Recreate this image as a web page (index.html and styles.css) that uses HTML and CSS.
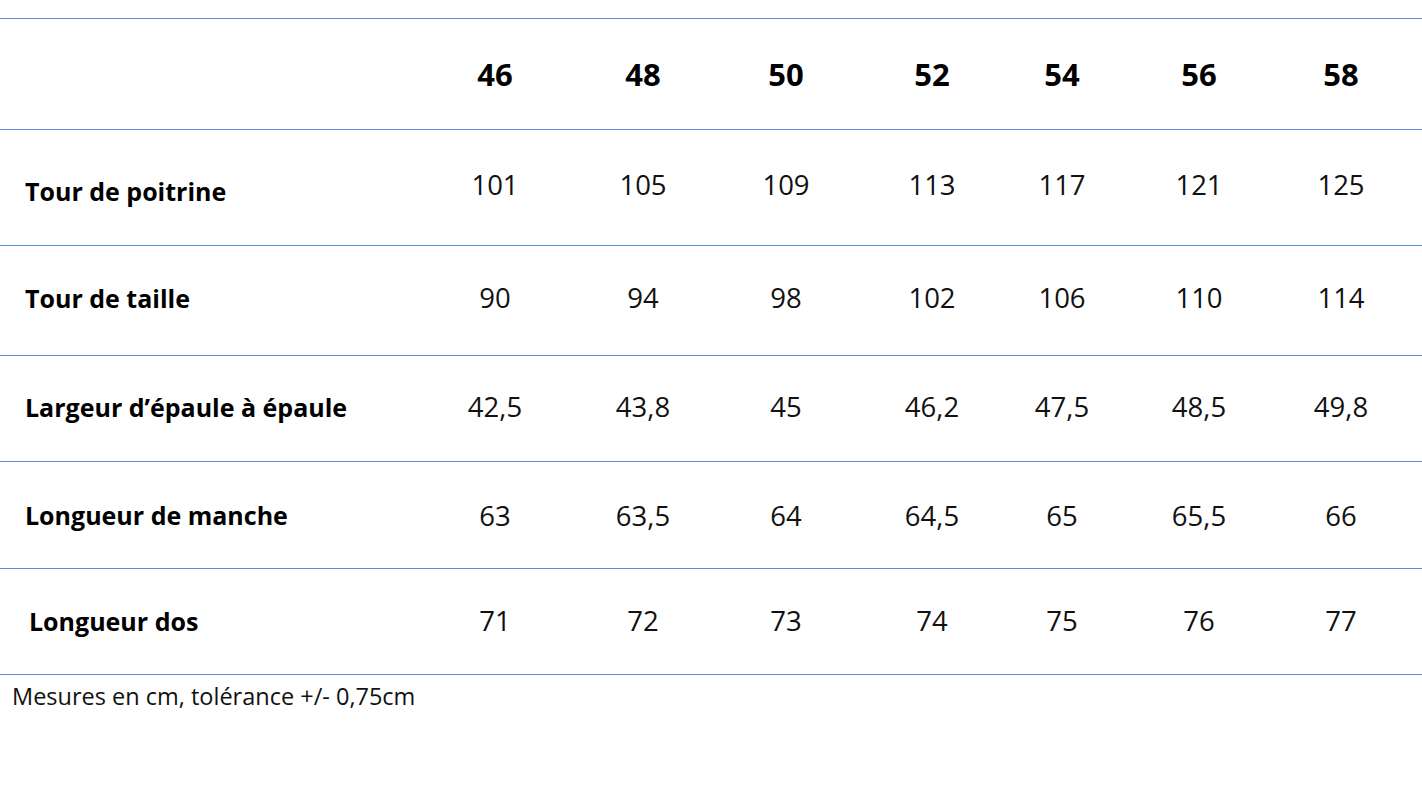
FILE: index.html
```html
<!DOCTYPE html>
<html lang="fr">
<head>
<meta charset="utf-8">
<title>Guide des tailles</title>
<link rel="stylesheet" href="styles.css">
</head>
<body>
<main class="page">
  <div class="size-table">
    <div class="row head">
      <div class="label"></div>
      <div class="cell">46</div><div class="cell">48</div><div class="cell">50</div><div class="cell">52</div><div class="cell">54</div><div class="cell">56</div><div class="cell">58</div>
    </div>
    <div class="row r1">
      <div class="label">Tour de poitrine</div>
      <div class="cell">101</div><div class="cell">105</div><div class="cell">109</div><div class="cell">113</div><div class="cell">117</div><div class="cell">121</div><div class="cell">125</div>
    </div>
    <div class="row r2">
      <div class="label">Tour de taille</div>
      <div class="cell">90</div><div class="cell">94</div><div class="cell">98</div><div class="cell">102</div><div class="cell">106</div><div class="cell">110</div><div class="cell">114</div>
    </div>
    <div class="row r3">
      <div class="label">Largeur d’épaule à épaule</div>
      <div class="cell">42,5</div><div class="cell">43,8</div><div class="cell">45</div><div class="cell">46,2</div><div class="cell">47,5</div><div class="cell">48,5</div><div class="cell">49,8</div>
    </div>
    <div class="row r4">
      <div class="label">Longueur de manche</div>
      <div class="cell">63</div><div class="cell">63,5</div><div class="cell">64</div><div class="cell">64,5</div><div class="cell">65</div><div class="cell">65,5</div><div class="cell">66</div>
    </div>
    <div class="row r5">
      <div class="label indent">Longueur dos</div>
      <div class="cell">71</div><div class="cell">72</div><div class="cell">73</div><div class="cell">74</div><div class="cell">75</div><div class="cell">76</div><div class="cell">77</div>
    </div>
  </div>
  <p class="note">Mesures en cm, tolérance +/- 0,75cm</p>
</main>
</body>
</html>
```
FILE: styles.css
```css
* { box-sizing: border-box; }
html, body { margin: 0; padding: 0; background: #ffffff; }
body {
  font-family: "Open Sans", "Liberation Sans", sans-serif;
  color: #111111;
  width: 1422px;
  height: 800px;
  overflow: hidden;
}
.page { padding-top: 18px; }
.size-table {
  border-bottom: 1px solid #5b8ed8;
}
.row {
  display: grid;
  grid-template-columns: 420px 150px 146px 140px 152px 108px 166px 118px;
  align-items: center;
  border-top: 1px solid #5b8ed8;
}
.head { height: 111px; }
.r1 { height: 116px; }
.r2 { height: 110px; padding-bottom: 6px; }
.r3 { height: 106px; padding-bottom: 4px; }
.r4 { height: 107px; }
.r5 { height: 106px; padding-bottom: 2px; }
.label {
  padding-left: 25px;
  font-weight: 700;
  font-size: 25px;
  color: #000;
}
.label.indent { padding-left: 29px; }
.cell {
  text-align: center;
  font-size: 27.5px;
  color: #111;
}
.head .cell {
  font-weight: 700;
  font-size: 31px;
  color: #000;
}
.r1 .label { padding-top: 6px; }
.r1 .cell { padding-bottom: 6px; }
.note {
  margin: 5px 0 0 12px;
  font-size: 23.5px;
  color: #111;
}
```
